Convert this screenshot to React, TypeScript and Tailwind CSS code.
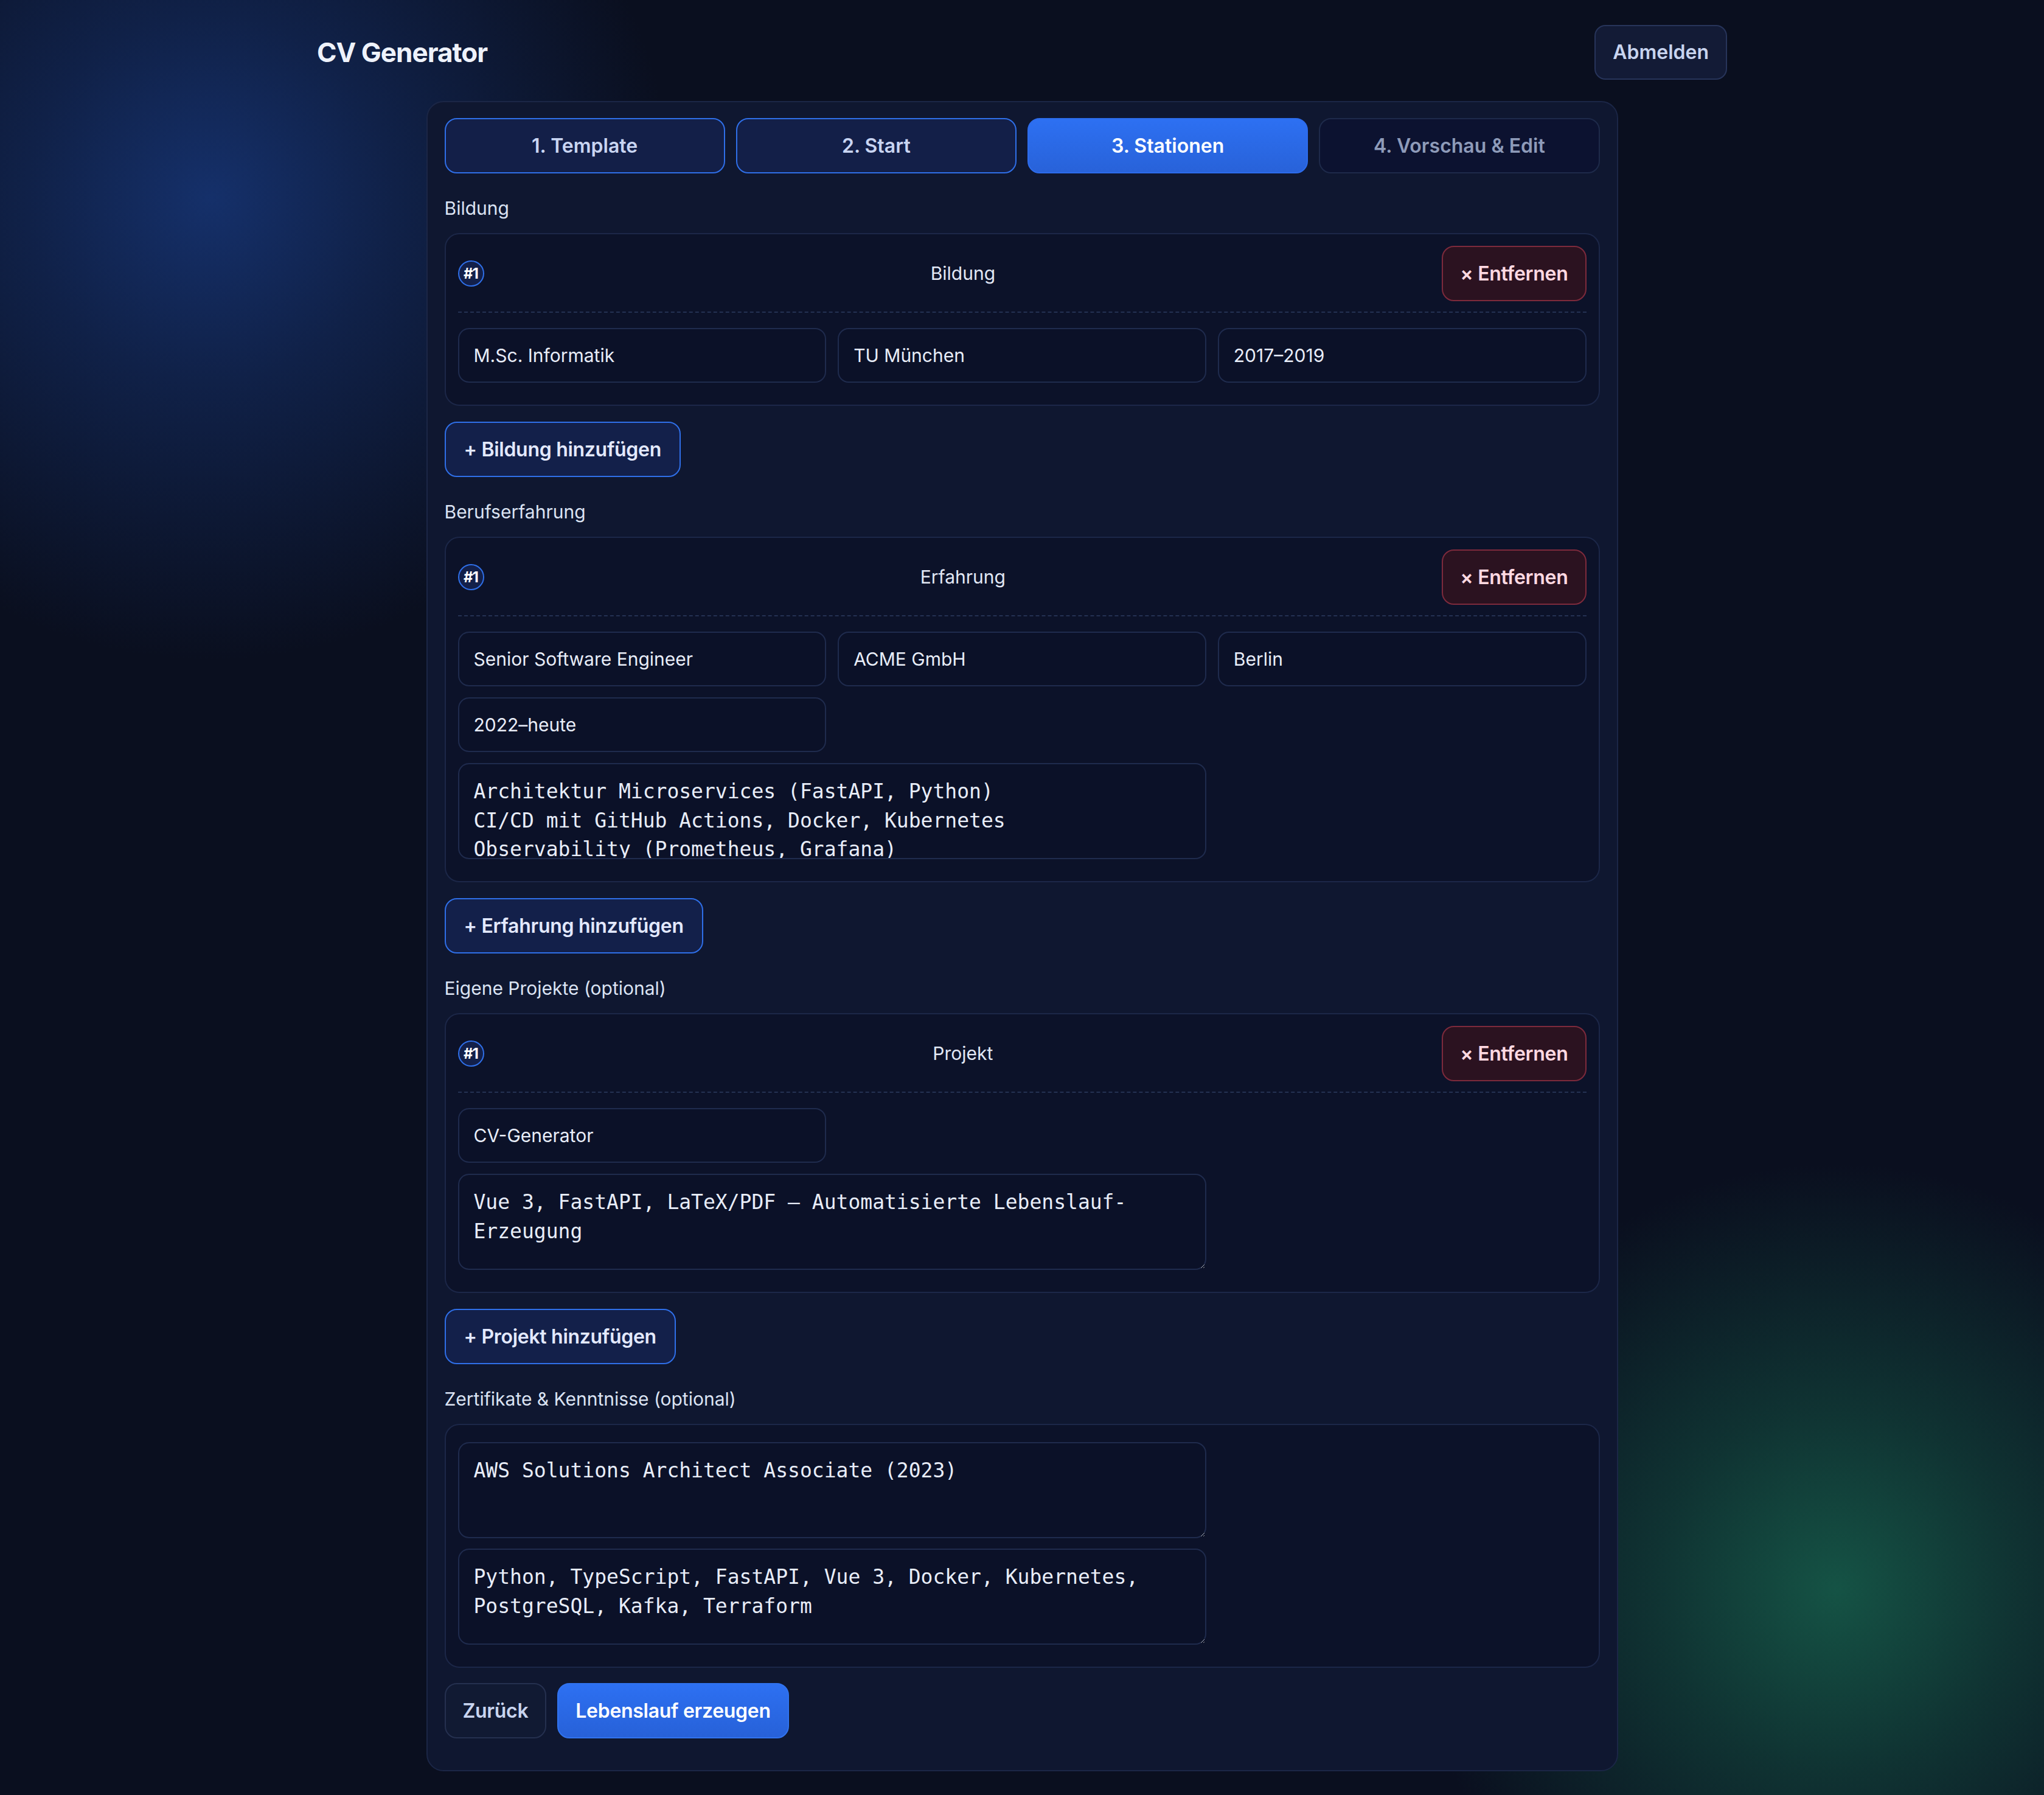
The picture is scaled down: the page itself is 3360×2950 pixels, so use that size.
import React from 'react';

type Field = { value: string; area?: boolean; clip?: boolean };

const steps = [
  { label: '1. Template', state: 'done' },
  { label: '2. Start', state: 'done' },
  { label: '3. Stationen', state: 'active' },
  { label: '4. Vorschau & Edit', state: 'todo' },
];

const stepClass = {
  done: 'bg-[#131f48] border-[#2f6fe8] text-[#c9d5f2]',
  active: 'bg-gradient-to-b from-[#2d70f2] to-[#2862d9] border-[#2d6cec] text-white',
  todo: 'bg-[#0c1230] border-[#1e2a4a] text-[#8e9bb9]',
};

function Input({ field }: { field: Field }) {
  if (field.area) {
    return (
      <textarea
        defaultValue={field.value}
        className={`col-span-2 col-start-1 h-[158px] rounded-[18px] border-2 border-[#1f2b4d] bg-[#0b1128] px-[24px] pt-[21px] pb-[10px] font-['DejaVu_Sans_Mono',monospace] text-[33px] leading-[47.5px] text-[#e8edf8] outline-none [color-scheme:dark] ${
          field.clip ? 'resize-none overflow-hidden [scrollbar-width:none]' : ''
        }`}
      />
    );
  }
  return (
    <input
      defaultValue={field.value}
      className="h-[90px] rounded-[18px] border-2 border-[#1f2b4d] bg-[#0b1128] px-[24px] text-[30px] text-[#e8edf8] outline-none"
    />
  );
}

function Entry({ title, fields }: { title: string; fields: Field[] }) {
  return (
    <div className="rounded-[24px] border-2 border-[#1c2748] bg-[#0c1229] px-[20px] pt-[19px] pb-[36px]">
      {/* Kopfzeile mit Nummer, Titel und Entfernen */}
      <div className="mb-[25px] flex items-center border-b-2 border-dashed border-[#243152] pb-[17px]">
        <span className="flex h-[43px] w-[43px] items-center justify-center rounded-full border-2 border-[#2f6fe8] bg-[#13204a] text-[24px] font-bold tracking-[-1px] text-white">
          #1
        </span>
        <span className="flex-1 text-center text-[30px] text-[#e2e8f5]">{title}</span>
        <button className="h-[91px] rounded-[20px] border-2 border-[#7d2a3c] bg-[#2b1220] px-[28px] text-[32px] font-semibold tracking-[-0.3px] text-[#ffd9e2]">
          × Entfernen
        </button>
      </div>
      <div className="grid grid-cols-3 gap-x-[19px] gap-y-[18px]">
        {fields.map((f, i) => (
          <Input key={i} field={f} />
        ))}
      </div>
    </div>
  );
}

function Label({ children }: { children: React.ReactNode }) {
  return <p className="mt-[35px] mb-[18px] text-[30px] leading-[45px] text-[#dbe3f3]">{children}</p>;
}

function AddButton({ children }: { children: React.ReactNode }) {
  return (
    <button className="mt-[26px] h-[91px] rounded-[20px] border-2 border-[#2f6fe8] bg-[#13204a] px-[30px] text-[32px] font-semibold tracking-[-0.3px] text-[#e3e9ff]">
      {children}
    </button>
  );
}

export default function App() {
  return (
    <div className="min-h-[2950px] bg-[#0a0f1f] bg-[radial-gradient(circle_at_345px_325px,#15306a_0px,rgba(21,48,106,0.55)_300px,rgba(21,48,106,0)_760px),radial-gradient(circle_at_3018px_2612px,#155345_0px,rgba(20,80,66,0.55)_300px,rgba(20,80,66,0)_700px)] font-['Inter','Noto_Sans',sans-serif]">
      {/* Kopfzeile */}
      <header className="mx-auto flex w-[2318px] items-center justify-between pt-[41px]">
        <h1 className="text-[44px] font-bold tracking-[-1px] text-[#eef2fb]">CV Generator</h1>
        <button className="h-[90px] rounded-[18px] border-2 border-[#27345a] bg-[#131b36] px-[28px] text-[32px] font-semibold text-[#c8d4ef]">
          Abmelden
        </button>
      </header>

      <main className="mx-auto mt-[35px] w-[1959px] rounded-[28px] border-2 border-[#1b2646] bg-[#0f1730] px-[28px] pt-[26px] pb-[52px]">
        {/* Schritte */}
        <div className="grid grid-cols-4 gap-[18px]">
          {steps.map((s) => (
            <button
              key={s.label}
              className={`h-[91px] rounded-[20px] border-2 text-[32px] font-semibold ${stepClass[s.state as keyof typeof stepClass]}`}
            >
              {s.label}
            </button>
          ))}
        </div>

        <Label>Bildung</Label>
        <Entry
          title="Bildung"
          fields={[{ value: 'M.Sc. Informatik' }, { value: 'TU München' }, { value: '2017–2019' }]}
        />
        <AddButton>+ Bildung hinzufügen</AddButton>

        <Label>Berufserfahrung</Label>
        <Entry
          title="Erfahrung"
          fields={[
            { value: 'Senior Software Engineer' },
            { value: 'ACME GmbH' },
            { value: 'Berlin' },
            { value: '2022–heute' },
            {
              value:
                'Architektur Microservices (FastAPI, Python)\nCI/CD mit GitHub Actions, Docker, Kubernetes\nObservability (Prometheus, Grafana)',
              area: true,
              clip: true,
            },
          ]}
        />
        <AddButton>+ Erfahrung hinzufügen</AddButton>

        <Label>Eigene Projekte (optional)</Label>
        <Entry
          title="Projekt"
          fields={[
            { value: 'CV-Generator' },
            { value: 'Vue 3, FastAPI, LaTeX/PDF — Automatisierte Lebenslauf-Erzeugung', area: true },
          ]}
        />
        <AddButton>+ Projekt hinzufügen</AddButton>

        <Label>Zertifikate &amp; Kenntnisse (optional)</Label>
        <div className="grid grid-cols-3 gap-x-[19px] gap-y-[17px] rounded-[24px] border-2 border-[#1c2748] bg-[#0c1229] px-[20px] pt-[28px] pb-[36px]">
          <Input field={{ value: 'AWS Solutions Architect Associate (2023)', area: true }} />
          <Input
            field={{
              value: 'Python, TypeScript, FastAPI, Vue 3, Docker, Kubernetes, PostgreSQL, Kafka, Terraform',
              area: true,
            }}
          />
        </div>

        {/* Aktionen */}
        <div className="mt-[25px] flex gap-[18px]">
          <button className="h-[91px] rounded-[20px] border-2 border-[#25304f] bg-[#111a33] px-[28px] text-[32px] font-semibold tracking-[-0.3px] text-[#c8d4ef]">
            Zurück
          </button>
          <button className="h-[91px] rounded-[20px] border-2 border-[#3173ee] bg-gradient-to-b from-[#2d70f2] to-[#2761d8] px-[28px] text-[32px] font-semibold tracking-[-0.3px] text-white">
            Lebenslauf erzeugen
          </button>
        </div>
      </main>
    </div>
  );
}
